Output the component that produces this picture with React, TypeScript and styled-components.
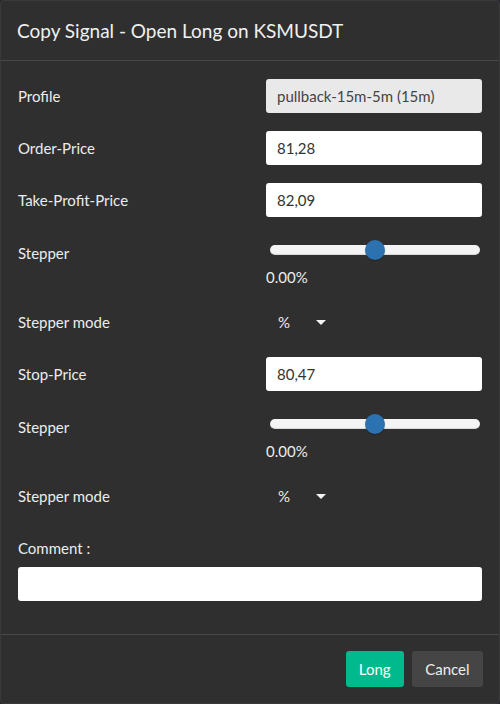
import React from "react";
import styled, { createGlobalStyle } from "styled-components";

const Global = createGlobalStyle`
  html, body { margin: 0; padding: 0; background: #2a2630; }
  body { font-family: Lato, "Open Sans", sans-serif; }
  * { box-sizing: border-box; }
`;

const Dialog = styled.div`
  width: 500px;
  height: 704px;
  background: #2f2f2f;
  border: 1px solid #3a3a3a;
  border-radius: 4px;
  display: flex;
  flex-direction: column;
  color: #ececec;
  overflow: hidden;
`;

const Header = styled.div`
  height: 60px;
  flex: none;
  display: flex;
  align-items: center;
  padding: 0 16px;
  border-bottom: 1px solid #474747;
`;

const Title = styled.h1`
  margin: 0;
  font-size: 19px;
  font-weight: 400;
  color: #f0f0f0;
`;

const Body = styled.div`
  flex: 1;
  padding: 18px 17px 0 17px;
  display: flex;
  flex-direction: column;
`;

const Row = styled.div<{ $gap?: number }>`
  display: grid;
  grid-template-columns: 248px 1fr;
  align-items: center;
  margin-bottom: ${(p) => (p.$gap ?? 18)}px;
`;

const TopRow = styled(Row)`
  align-items: start;
`;

const Label = styled.label<{ $top?: number }>`
  font-size: 15px;
  color: #ececec;
  padding-top: ${(p) => p.$top ?? 0}px;
  line-height: 20px;
`;

const Input = styled.input<{ $disabled?: boolean }>`
  height: 34px;
  width: 100%;
  border: none;
  border-radius: 3px;
  padding: 0 11px;
  font-family: Lato, "Open Sans", sans-serif;
  font-size: 15px;
  color: ${(p) => (p.$disabled ? "#444" : "#333")};
  background: ${(p) => (p.$disabled ? "#e9e9e9" : "#ffffff")};
  outline: none;
`;

const SliderBox = styled.div`
  display: flex;
  flex-direction: column;
`;

const SliderWrap = styled.div`
  position: relative;
  height: 30px;
  margin: 0 2px 0 4px;
  display: flex;
  align-items: center;
`;

const Track = styled.div`
  width: 100%;
  height: 10px;
  border-radius: 5px;
  background: #f4f4f4;
  box-shadow: inset 0 -1px 1px rgba(0, 0, 0, 0.12);
`;

const Thumb = styled.div`
  position: absolute;
  top: 50%;
  width: 20px;
  height: 20px;
  border-radius: 50%;
  background: #2d72b0;
  transform: translate(-50%, -50%);
  box-shadow: 0 1px 1px rgba(0, 0, 0, 0.25);
`;

const Value = styled.div`
  margin-top: 2px;
  font-size: 15px;
  line-height: 20px;
  color: #ececec;
`;

const Select = styled.div`
  height: 34px;
  width: 72px;
  display: flex;
  align-items: center;
  justify-content: space-between;
  padding: 0 12px;
  font-size: 15px;
  color: #ececec;
`;

const Caret = styled.span`
  width: 0;
  height: 0;
  border-left: 5px solid transparent;
  border-right: 5px solid transparent;
  border-top: 5px solid #f4f4f4;
`;

const CommentLabel = styled.label`
  display: block;
  font-size: 15px;
  line-height: 20px;
  color: #ececec;
  margin-top: 25px;
  margin-bottom: 9px;
`;

const Footer = styled.div`
  flex: none;
  border-top: 1px solid #474747;
  padding: 16px 16px 16px 0;
  display: flex;
  justify-content: flex-end;
  gap: 8px;
`;

const Button = styled.button<{ $primary?: boolean }>`
  height: 36px;
  border: none;
  border-radius: 3px;
  padding: 0 ${(p) => (p.$primary ? "13px" : "13.5px")};
  font-family: Lato, "Open Sans", sans-serif;
  font-size: 15px;
  background: ${(p) => (p.$primary ? "#00ba8e" : "#454545")};
  color: ${(p) => (p.$primary ? "#ffffff" : "#eeeeee")};
`;

const Stepper: React.FC<{ pct: number; value: string }> = ({ pct, value }) => (
  <TopRow>
    <Label $top={8}>Stepper</Label>
    <SliderBox>
      <SliderWrap>
        <Track />
        <Thumb style={{ left: `${pct}%` }} />
      </SliderWrap>
      <Value>{value}</Value>
    </SliderBox>
  </TopRow>
);

const ModeRow: React.FC<{ $gap?: number }> = ({ $gap }) => (
  <Row $gap={$gap}>
    <Label>Stepper mode</Label>
    <Select>
      <span>%</span>
      <Caret />
    </Select>
  </Row>
);

export default function App() {
  return (
    <>
      <Global />
      <Dialog>
        <Header>
          <Title>Copy Signal - Open Long on KSMUSDT</Title>
        </Header>
        <Body>
          <Row>
            <Label>Profile</Label>
            <Input $disabled readOnly value="pullback-15m-5m (15m)" />
          </Row>
          <Row>
            <Label>Order-Price</Label>
            <Input readOnly value="81,28" />
          </Row>
          <Row>
            <Label>Take-Profit-Price</Label>
            <Input readOnly value="82,09" />
          </Row>
          <Stepper pct={50} value="0.00%" />
          <ModeRow />
          <Row>
            <Label>Stop-Price</Label>
            <Input readOnly value="80,47" />
          </Row>
          <Stepper pct={50} value="0.00%" />
          <ModeRow $gap={0} />
          <CommentLabel>Comment :</CommentLabel>
          <Input readOnly value="" />
        </Body>
        <Footer>
          <Button $primary>Long</Button>
          <Button>Cancel</Button>
        </Footer>
      </Dialog>
    </>
  );
}
